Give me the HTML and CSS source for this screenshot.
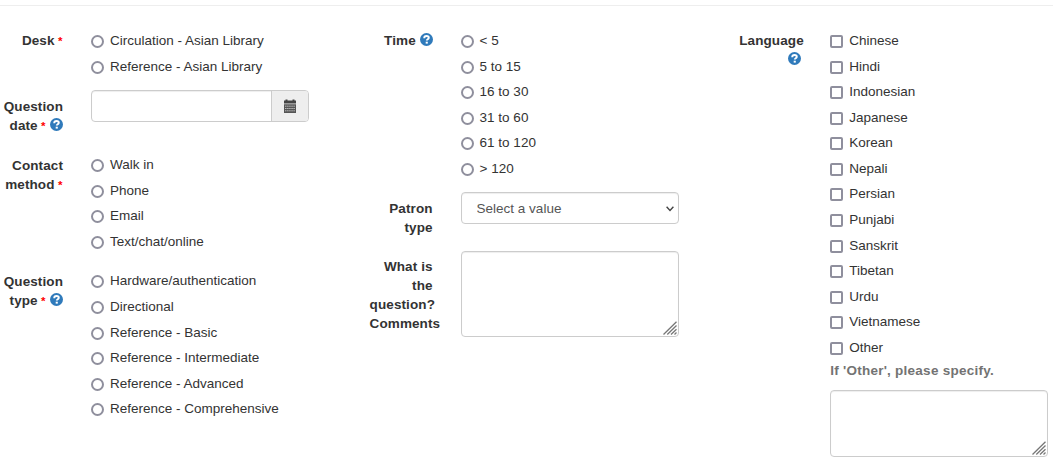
FILE: index.html
```html
<!DOCTYPE html>
<html lang="en">
<head>
<meta charset="utf-8">
<title>Question form</title>
<link rel="stylesheet" href="styles.css">
</head>
<body>
<svg class="defs" aria-hidden="true">
  <symbol id="help" viewBox="0 0 13 13">
    <circle cx="6.5" cy="6.5" r="6.5" fill="#2f7abb"/>
    <path d="M4.200 5.200C4.200 3.600 5.100 3 6.500 3c1.400 0 2.300.7 2.300 1.700 0 1.500-2 1.500-2 2.900" fill="none" stroke="#fff" stroke-width="1.900"/>
    <rect x="5.700" y="8.700" width="2.100" height="1.900" fill="#fff"/>
  </symbol>
  <symbol id="grip" viewBox="0 0 14 14">
    <path d="M.5 13.500 13.500.8M4.300 13.500 13.500 4.500M8 13.500 13.500 8.200M11.500 13.500 13.500 11.500" fill="none" stroke="#777" stroke-width="1.300"/>
  </symbol>
</svg>
<form class="form">
  <div class="column">
    <div class="group">
      <div class="label">Desk <span class="req">*</span></div>
      <div class="options">
        <label><input type="radio" name="desk"><span>Circulation - Asian Library</span></label>
        <label><input type="radio" name="desk"><span>Reference - Asian Library</span></label>
      </div>
    </div>
    <div class="group field date-group">
      <div class="label">Question date <span class="req">*</span> <svg class="help"><use href="#help"/></svg></div>
      <div class="date">
        <input type="text">
        <button type="button"><svg width="14" height="14" viewBox="0 0 14 14"><path d="M1 1.500h1.500V.5h2v1h5v-1h2v1H13v3H1z" fill="#444"/><path d="M1 5.300h12V14H1z" fill="#555"/><path d="M2 7.200h10M2 9.500h10M2 11.800h10" stroke="#bbb" stroke-width="1" stroke-dasharray="1.500 .6"/></svg></button>
      </div>
    </div>
    <div class="group">
      <div class="label">Contact method <span class="req">*</span></div>
      <div class="options">
        <label><input type="radio" name="contact"><span>Walk in</span></label>
        <label><input type="radio" name="contact"><span>Phone</span></label>
        <label><input type="radio" name="contact"><span>Email</span></label>
        <label><input type="radio" name="contact"><span>Text/chat/online</span></label>
      </div>
    </div>
    <div class="group type-group">
      <div class="label">Question type <span class="req">*</span> <svg class="help"><use href="#help"/></svg></div>
      <div class="options">
        <label><input type="radio" name="type"><span>Hardware/authentication</span></label>
        <label><input type="radio" name="type"><span>Directional</span></label>
        <label><input type="radio" name="type"><span>Reference - Basic</span></label>
        <label><input type="radio" name="type"><span>Reference - Intermediate</span></label>
        <label><input type="radio" name="type"><span>Reference - Advanced</span></label>
        <label><input type="radio" name="type"><span>Reference - Comprehensive</span></label>
      </div>
    </div>
  </div>
  <div class="column">
    <div class="group">
      <div class="label">Time <svg class="help"><use href="#help"/></svg></div>
      <div class="options">
        <label><input type="radio" name="time"><span>&lt; 5</span></label>
        <label><input type="radio" name="time"><span>5 to 15</span></label>
        <label><input type="radio" name="time"><span>16 to 30</span></label>
        <label><input type="radio" name="time"><span>31 to 60</span></label>
        <label><input type="radio" name="time"><span>61 to 120</span></label>
        <label><input type="radio" name="time"><span>&gt; 120</span></label>
      </div>
    </div>
    <div class="group field patron-group">
      <div class="label">Patron type</div>
      <div class="select">
        <select><option>Select a value</option></select>
        <svg class="chevron" viewBox="0 0 8 6"><path d="M.6.8 4 4.400 7.400.8" fill="none" stroke="#444" stroke-width="1.400"/></svg>
      </div>
    </div>
    <div class="group field">
      <div class="label">What is the question? Comments</div>
      <div class="area"><textarea class="comments"></textarea><svg class="grip"><use href="#grip"/></svg></div>
    </div>
  </div>
  <div class="column">
    <div class="group">
      <div class="label">Language <svg class="help language-help"><use href="#help"/></svg></div>
      <div class="options">
        <label><input type="checkbox"><span>Chinese</span></label>
        <label><input type="checkbox"><span>Hindi</span></label>
        <label><input type="checkbox"><span>Indonesian</span></label>
        <label><input type="checkbox"><span>Japanese</span></label>
        <label><input type="checkbox"><span>Korean</span></label>
        <label><input type="checkbox"><span>Nepali</span></label>
        <label><input type="checkbox"><span>Persian</span></label>
        <label><input type="checkbox"><span>Punjabi</span></label>
        <label><input type="checkbox"><span>Sanskrit</span></label>
        <label><input type="checkbox"><span>Tibetan</span></label>
        <label><input type="checkbox"><span>Urdu</span></label>
        <label><input type="checkbox"><span>Vietnamese</span></label>
        <label><input type="checkbox"><span>Other</span></label>
        <div class="hint">If 'Other', please specify.</div>
        <div class="area"><textarea class="other"></textarea><svg class="grip"><use href="#grip"/></svg></div>
      </div>
    </div>
  </div>
</form>
</body>
</html>
```
FILE: styles.css
```css
* { box-sizing: border-box; }
body {
  margin: 0;
  padding-top: 5px;
  height: 462px;
  overflow: hidden;
  background: #fff;
  color: #333;
  font: 13.5px/18.94px "Liberation Sans", Arial, sans-serif;
}
.defs { position: absolute; width: 0; height: 0; }
.form {
  display: grid;
  grid-template-columns: 369.6px 369.6px 1fr;
  border-top: 1px solid #eee;
  padding-top: 22.2px;
}
.group {
  display: grid;
  grid-template-columns: 63px 218px;
  column-gap: 28px;
  align-items: start;
}
.label {
  padding-top: 4.3px;
  font-weight: bold;
  font-size: 13.5px;
  letter-spacing: .1px;
  text-align: right;
}
.field .label { padding-top: 7.5px; }
.req { margin-left: -.5px; margin-right: .5px; color: #f00; font-size: 11.5px; line-height: 1; }
.help { width: 13px; height: 13px; vertical-align: -1px; }
.language-help { margin-right: 1px; }
.date-group { margin: 10.8px 0 16.8px; }
.type-group { margin-top: 14px; }
.patron-group { margin: 10.5px 0 13.4px; }
.options label {
  display: flex;
  align-items: center;
  gap: 6px;
  height: 25.58px;
}
.options label span { padding-top: 1px; }
.options input {
  appearance: none;
  flex: none;
  width: 13px;
  height: 13px;
  margin: 1px 0 0;
  border: 2px solid #8f8f9d;
  border-radius: 2px;
  background: #fff;
}
.options input[type="radio"] { border-radius: 50%; }
.date, .select select, .area textarea {
  border: 1px solid #ccc;
  border-radius: 4px;
  background: #fff;
  box-shadow: inset 0 1px 1px rgba(0, 0, 0, .07);
}
.date { display: flex; height: 32px; overflow: hidden; }
.date input { flex: 1; min-width: 0; border: 0; background: none; }
.date button {
  display: grid;
  place-items: center;
  width: 37px;
  padding: 0;
  border: 0;
  border-left: 1px solid #ccc;
  background: #eee;
}
.select, .area { position: relative; }
.select select {
  display: block;
  appearance: none;
  width: 100%;
  height: 32px;
  padding: 2px 15px 0;
  color: #555;
  font: inherit;
}
.chevron { position: absolute; right: 5px; top: 14px; width: 8px; height: 6px; }
.area textarea { display: block; width: 100%; resize: none; }
.comments { height: 86px; }
.other { height: 67px; }
.grip { position: absolute; right: 2px; bottom: 2px; width: 14px; height: 14px; }
.hint { margin: 1.5px 0 8.8px; color: #737373; font-weight: bold; letter-spacing: .25px; }
```
